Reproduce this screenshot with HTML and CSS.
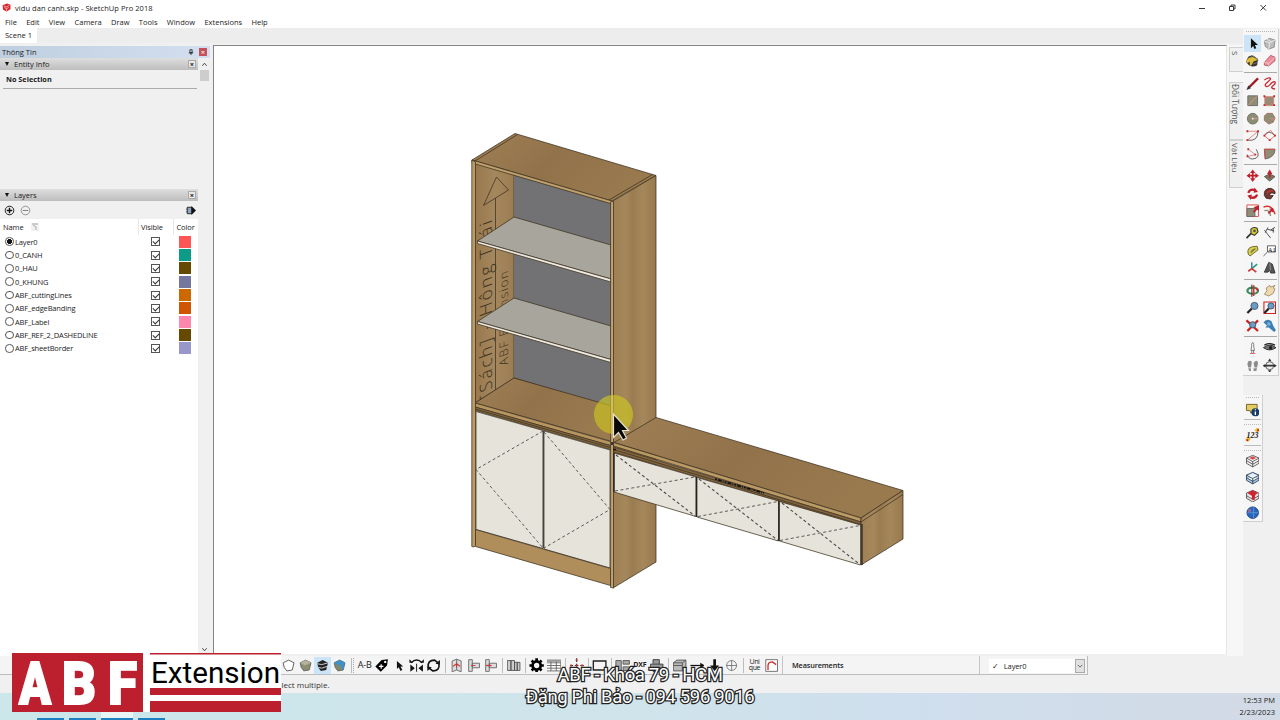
FILE: index.html
```html
<!DOCTYPE html>
<html lang="vi">
    <head>
        <meta charset="utf-8">
        <title>vidu dan canh.skp - SketchUp Pro 2018</title>
        <link rel="stylesheet" href="styles.css">
    </head>
    <body>
        <header class="titlebar">
            <svg class="app-icon" viewBox="0 0 16 16"><path fill="#d8232a" d="M1 4 9 1l6 2v8l-7 4-6-3z"/><path fill="none" stroke="#fff" d="m3 5 5 2 5-3M4 8l4 2 4-2M8 10v4"/></svg>
            <span class="title">vidu dan canh.skp - SketchUp Pro 2018</span>
            <svg class="window-buttons" viewBox="0 0 80 14"><path fill="none" stroke="#222" stroke-width=".9" d="M9 7.500h6M39.500 5.500h4v4h-4zM41 5V4h4v4h-1M70.500 4l5.500 5.500M76 4l-5.500 5.500"/></svg>
        </header>
        <nav class="menu">
            <span>File</span><span>Edit</span><span>View</span><span>Camera</span><span>Draw</span><span>Tools</span><span>Window</span><span>Extensions</span><span>Help</span>
        </nav>

        <div class="workspace">
            <div class="left">
                <div class="scenes"><span class="scene">Scene 1</span></div>
                <div class="content">
                    <aside class="tray">
                        <div class="tray-title"><span>Thông Tin</span>
                            <svg class="pin" viewBox="0 0 8 8"><path fill="none" stroke="#111" d="M2.500 1h3v4h-3zM1 5.200h6M4 5v3"/></svg>
                            <span class="tray-close">×</span>
                        </div>
                        <div class="tray-body">
                            <div class="panels">
                                <div class="panel-head"><i></i><span>Entity Info</span><b>×</b></div>
                                <div class="entity"><p>No Selection</p></div>
                                <div class="panel-head"><i></i><span>Layers</span><b>×</b></div>
                                <div class="layer-tools">
                                    <svg viewBox="0 0 12 12"><circle cx="6" cy="6" r="4.700" fill="none" stroke="#111"/><path stroke="#111" stroke-width="1.500" d="M3 6h6M6 3v6"/></svg>
                                    <svg viewBox="0 0 12 12"><circle cx="6" cy="6" r="4.700" fill="none" stroke="#777" stroke-width=".8"/><path stroke="#777" d="M3 6h6"/></svg>
                                    <svg class="details" viewBox="0 0 12 12"><path fill="#8aa5bc" stroke="#222" d="M2.500 2.500h5v7h-5z"/><path fill="#111" d="M1 4h1v1H1zM1 7h1v1H1zM7 1l5 5-5 5z"/></svg>
                                </div>
                                <div class="layers">
                                    <div class="layer head"><span class="name">Name <svg viewBox="0 0 8 8"><path fill="none" stroke="#aaa" d="M1 1h6M2 2l3 2v3"/></svg></span><span class="vis">Visible</span><span class="col">Color</span></div>
                                    <div class="layer"><span class="name"><i class="radio on"></i>Layer0</span><span class="vis"><i class="check"></i></span><span class="col"><i class="c-red"></i></span></div>
                                    <div class="layer"><span class="name"><i class="radio"></i>0_CANH</span><span class="vis"><i class="check"></i></span><span class="col"><i class="c-teal"></i></span></div>
                                    <div class="layer"><span class="name"><i class="radio"></i>0_HAU</span><span class="vis"><i class="check"></i></span><span class="col"><i class="c-brown"></i></span></div>
                                    <div class="layer"><span class="name"><i class="radio"></i>0_KHUNG</span><span class="vis"><i class="check"></i></span><span class="col"><i class="c-slate"></i></span></div>
                                    <div class="layer"><span class="name"><i class="radio"></i>ABF_cuttingLines</span><span class="vis"><i class="check"></i></span><span class="col"><i class="c-orange"></i></span></div>
                                    <div class="layer"><span class="name"><i class="radio"></i>ABF_edgeBanding</span><span class="vis"><i class="check"></i></span><span class="col"><i class="c-rust"></i></span></div>
                                    <div class="layer"><span class="name"><i class="radio"></i>ABF_Label</span><span class="vis"><i class="check"></i></span><span class="col"><i class="c-pink"></i></span></div>
                                    <div class="layer"><span class="name"><i class="radio"></i>ABF_REF_2_DASHEDLINE</span><span class="vis"><i class="check"></i></span><span class="col"><i class="c-brown"></i></span></div>
                                    <div class="layer"><span class="name"><i class="radio"></i>ABF_sheetBorder</span><span class="vis"><i class="check"></i></span><span class="col"><i class="c-lilac"></i></span></div>
                                </div>
                            </div>
                            <div class="scroll">
                                <svg viewBox="0 0 8 8"><path fill="none" stroke="#333" d="m1.500 5.500 2.500-3 2.500 3"/></svg>
                                <i></i>
                                <svg viewBox="0 0 8 8"><path fill="none" stroke="#333" d="m1.500 2.500 2.500 3 2.500-3"/></svg>
                            </div>
                        </div>
                    </aside>

                    <main class="viewport">
                        <svg class="model" viewBox="214 46 1012 607">
                            <defs>
                                <linearGradient id="side" x1="0" x2="1"><stop offset="0" stop-color="#9f8053"/><stop offset=".3" stop-color="#a4875c"/><stop offset=".45" stop-color="#9b7c51"/><stop offset=".7" stop-color="#a5875c"/><stop offset="1" stop-color="#99794e"/></linearGradient>
                                <linearGradient id="top" x1="0" x2="1" y2=".4"><stop offset="0" stop-color="#9f8055"/><stop offset=".5" stop-color="#92724a"/><stop offset="1" stop-color="#99794e"/></linearGradient>
                                <linearGradient id="inner" x1="0" x2="1"><stop offset="0" stop-color="#98784d"/><stop offset=".5" stop-color="#a5875e"/><stop offset="1" stop-color="#9c7d53"/></linearGradient>
                            </defs>
                            <g stroke="#3c3120" stroke-width=".75" stroke-linejoin="round">
                                <!-- tall cabinet -->
                                <path fill="url(#inner)" d="M475 163 514 172V378L475 403z"/>
                                <path fill="#727274" stroke="none" d="M514 172 611 202V408L514 379z"/>
                                <path fill="none" d="M514 378 611 407"/>
                                <g class="label">
                                    <path d="M496.500 177 508.500 190 483.500 205.500zM495.500 198V390"/>
                                    <text transform="matrix(0 -1 .95 -.35 492 397)" font-size="18" textLength="178">[Sách] - Hông Trái</text>
                                    <text transform="matrix(0 -1 .95 -.35 508 364)" font-size="12.500" textLength="94">ABF Extension</text>
                                </g>
                                <path fill="#a8a59d" d="M514 217 611 245V279L477.500 241z"/>
                                <path fill="#efebe2" d="M477.500 241 611 279V282L477.500 243.500z"/>
                                <path fill="#a8a59d" d="M514 298 611 326V359.500L477.500 321.500z"/>
                                <path fill="#efebe2" d="M477.500 321.500 611 359.500V362.500L477.500 324z"/>
                                <path fill="url(#top)" d="M514 378 612 406V441.500L475 403z"/>
                                <path fill="url(#top)" d="M472 160 515 133.500 656 175.500 612 201z"/>
                                <path fill="none" d="M475 161 517.500 134.500M609 200 652.500 174.500"/>
                                <path fill="#c0a06c" d="M472 160 612 201V204L472 163z"/>
                                <path fill="#b8955f" d="M475 403 612 442V446L475 407z"/>
                                <path fill="#84683f" d="M475 407 612 446V450L475 410.500z"/>
                                <path fill="none" d="M475 409 612 448"/>
                                <path fill="#e6e3da" d="M476 411.500 543 430.500V548.500L476 529.500zM544 431 610 450V568L544 549z"/>
                                <path fill="#b08e5c" d="M475.500 529.500 610.500 568.500V585.500L475.500 546.500z"/>
                                <path fill="#bc9a66" d="M471.800 160 475.500 162V545.500L474 547 471.800 546.500z"/>
                                <path fill="url(#side)" d="M613 201 656 175.500V562L613 588z"/>
                                <path fill="#c3a470" d="M610.600 202 613.500 201V588L610.600 587.500z"/>
                                <path fill="none" stroke="#222" d="M543.400 431V548"/>
                                <path class="dash" d="M543 431 476 469.500 543 548M544 432 610 509.500 544 548"/>
                                <!-- desk with three drawers -->
                                <path fill="url(#top)" d="M614 442.500 656 417.500 903 490.500 861 518z"/>
                                <path fill="#bc9a64" d="M613.500 442.500 861 518V522L613.500 446z"/>
                                <path fill="#83663e" d="M613.500 447 861 522V526L613.500 452z"/>
                                <path fill="none" d="M613.500 449.500 861 524.500"/>
                                <path fill="url(#side)" d="M861 518 903 490.500V539L861 565z"/>
                                <path fill="none" d="M861 522 903 494.500"/>
                                <path fill="#e6e3da" d="M614 453 696 477V516.500L614 492zM697 477.500 778.500 501V541L697 517zM779.500 501.500 860.500 525V565L779.500 541z"/>
                                <path fill="none" stroke="#222" stroke-width="1.200" d="M614 453V492M696.400 477V517M778.800 500.500V541M862 524V565"/>
                                <path class="dash heavy" d="M616 455 695 516M699 479 778 540.500M782 503 858 563"/>
                                <path class="dash" d="M615 491 695 477M698 516.500 778 501.500M780 540.500 860 525.500"/>
                                <path fill="none" stroke="#111" stroke-width="1.700" stroke-dasharray="2 1 4 1 1 1" d="M715 479 764 493"/>
                                <path stroke="#111" stroke-width="1.500" d="M613 449.500h3M612 442v3"/>
                            </g>
                            <circle cx="613.500" cy="414.500" r="19.500" fill="#cdc81f" opacity=".64"/>
                            <path stroke="#dcb873" stroke-width="1.500" d="M612 396V434"/>
                            <path fill="#080808" stroke="#e8e0d0" stroke-width="1.200" d="M613.500 414V437.500L618.500 432.500 623 440 626.500 438 622.500 430.500H628.500z"/>
                        </svg>
                    </main>

                    <div class="side-tabs"><span>S</span><span>Đối Tượng</span><span>Vật Liệu</span></div>
                </div>
            </div>

            <div class="docks">
                <div class="dock large">
                    <svg class="active" viewBox="0 0 16 16"><path fill="#111" d="M6 2v11l2.500-2.500L10 14l2-1-1.500-3.500H14z"/></svg>
                    <svg viewBox="0 0 16 16"><path fill="#bbb" stroke="#888" d="m2 5 6-3 6 2-1 8-6 2-4-3z"/><path fill="none" stroke="#eee" d="m2 5 6 2 6-3M8 7l-1 7M5 3l5 3"/></svg>
                    <svg viewBox="0 0 16 16"><path fill="#333" d="M1 9q0-5 6-7l7 4-1 7q-7 4-12-3z"/><path fill="#e0bd36" d="M1 8q3-5 8-4l5 3-5 2-3 5q-2-1-1-5l-3 2z"/><path fill="none" stroke="#777" d="M6 4q3-4 8 4M8 12l5-2"/></svg>
                    <svg viewBox="0 0 16 16"><path fill="#ee8c9b" stroke="#9b4b59" stroke-width=".8" d="M2 10 9 2l5 2v4l-7 6-5-1z"/><path fill="none" stroke="#f8c5cb" d="m2 10 5 1 7-7M7 11v3"/></svg>
                    <hr>
                    <svg viewBox="0 0 16 16"><path stroke="#a01420" stroke-width="2.500" d="M4 12 14 2"/><path fill="#333" d="m1 15 2-5 3 3z"/></svg>
                    <svg viewBox="0 0 16 16"><path fill="none" stroke="#c72731" stroke-width="1.500" d="M2 4c4-4 9-3 6 0S1 9 4 11s5-4 8-5 3 2 0 4-2 4 2 4"/></svg>
                    <svg viewBox="0 0 16 16"><path fill="#8f8e75" stroke="#666" d="M2.500 2.500h11v11h-11z"/><path stroke="#e09a8a" d="M3 13 13 3"/></svg>
                    <svg viewBox="0 0 16 16"><path fill="#8f8e75" stroke="#d9817b" d="M2.500 3.500h10v10h-10z"/><path stroke="#d77" d="m3 4 9 9"/><path fill="#c22" d="M1 2h2v2H1zM12 2h2v2h-2zM12 12h2v2h-2zM1 12h2v2H1z"/></svg>
                    <svg viewBox="0 0 16 16"><circle cx="8" cy="8" r="6" fill="#8f8e75" stroke="#65705a"/><path stroke="#d99" d="M8 8h6"/><circle cx="8" cy="8" r="1" fill="#eee"/></svg>
                    <svg viewBox="0 0 16 16"><path fill="#8f8e75" stroke="#a76b60" d="m5 2 6 0 3 5-2 5-5 2-5-4V5z"/><path stroke="#d88" d="M8 8h6"/></svg>
                    <svg viewBox="0 0 16 16"><path fill="none" stroke="#555" d="M2 13Q14 15 14 3"/><path stroke="#e07f7f" d="M2 13 14 3M2 3h12"/><path fill="#c22" d="M1 2h2v2H1zM13 2h2v2h-2zM1 12h2v2H1z"/></svg>
                    <svg viewBox="0 0 16 16"><path fill="none" stroke="#555" d="M2 8q4-8 12 0"/><path fill="none" stroke="#d44" stroke-width=".8" d="m2 8 6 5 6-5-5-6z"/><path fill="#c22" d="M1 7h2v2H1zM7 12h2v2H7zM13 7h2v2h-2z"/></svg>
                    <svg viewBox="0 0 16 16"><path fill="none" stroke="#555" d="M12 3q6 10-4 11-5 0-6-5"/><path fill="none" stroke="#d66" stroke-width=".8" d="m3 3 8 6-8 2"/><path fill="#c22" d="M2 2h2v2H2zM10 8h2v2h-2zM1 10h2v2H1z"/></svg>
                    <svg viewBox="0 0 16 16"><path fill="#8f8e75" stroke="#666" d="M2 3h12q0 9-11 11z"/><path fill="none" stroke="#d44" d="M14 3H2l1 11"/></svg>
                    <hr>
                    <svg viewBox="0 0 16 16"><path fill="#c3202c" d="m8 1 3 4H9v2h2V5l4 3-4 3V9H9v2h2l-3 4-3-4h2V9H5v2L1 8l4-3v2h2V5H5z"/></svg>
                    <svg viewBox="0 0 16 16"><path fill="#77775e" stroke="#555" d="m2 9 6-3 6 3-6 5z"/><path fill="#c3202c" d="m8 1 3 5H9v4H7V6H5z"/></svg>
                    <svg viewBox="0 0 16 16"><path fill="none" stroke="#c3202c" stroke-width="2.500" d="M3 7q2-5 8-3M13 9q-2 5-8 3"/><path fill="#c3202c" d="m10 1 4 5-5 1zM6 15l-4-5 5-1z"/></svg>
                    <svg viewBox="0 0 16 16"><path fill="#713a32" stroke="#3e2927" d="M2 10Q1 2 9 2q6 2 5 6-5-2-6 1 1 2 4 1l-3 4-5-1z"/><path fill="none" stroke="#b33" stroke-width="2" d="M5 8q2-4 7-3"/></svg>
                    <svg viewBox="0 0 16 16"><path fill="none" stroke="#d44" d="M1.500 1.500h13v13h-13z"/><path fill="#8f8e75" stroke="#666" d="M1.500 5.500h9v9h-9z"/><path fill="#c3202c" d="M8 9 11 6 9 4l6-2v6l-2-1-3 3z"/></svg>
                    <svg viewBox="0 0 16 16"><path fill="none" stroke="#d33" stroke-width="1.600" d="M1 4Q10 0 14 12"/><path fill="none" stroke="#8f8e75" stroke-width="1.500" d="M2 8q6-2 7 6"/><path fill="#c3202c" d="m6 10 3-3-2-1 5-1v5l-2-1-3 3z"/></svg>
                    <hr>
                    <svg viewBox="0 0 16 16"><path fill="#d6cb2e" stroke="#333" stroke-width="1.200" d="M6 4q3-3 7-1l1 4-4 4-4-2z"/><path stroke="#333" stroke-width="2" d="m6 9-5 5"/><circle cx="10" cy="6" r="1.500" fill="#555"/></svg>
                    <svg viewBox="0 0 16 16"><path fill="none" stroke="#444" d="m2 5 7 9M5 4l8 2M3 8l3-6M9 5l5-3M12 3v5"/></svg>
                    <svg viewBox="0 0 16 16"><path fill="#d6cf53" stroke="#655f21" d="M3 12Q0 3 13 3l1 4-9 7z"/><path fill="#eee" stroke="#655f21" d="M6 10q0-3 5-4z"/></svg>
                    <svg viewBox="0 0 16 16"><path fill="#fff" stroke="#555" d="M5.500 2.500h9v7h-9zM5 10l-4 4"/><text x="6" y="9" font-size="7">A1</text></svg>
                    <svg viewBox="0 0 16 16"><path stroke="#2a9a70" stroke-width="1.800" d="M7 9 13 4"/><path stroke="#27b" stroke-width="1.500" d="M7 9V2"/><path stroke="#c33" stroke-width="1.800" d="m7 9 5 4M7 9l-4 3"/></svg>
                    <svg viewBox="0 0 16 16"><path fill="#555" stroke="#333" d="m7 2 4 2 3 10H9l-1-3-2 2H2z"/><path fill="none" stroke="#999" d="m8 3 1 8"/></svg>
                    <hr>
                    <svg viewBox="0 0 16 16"><ellipse cx="8" cy="8" rx="6" ry="3.500" fill="none" stroke="#3c8c5b" stroke-width="2.500"/><path fill="none" stroke="#c33" stroke-width="2" d="M9 2v12M12 5l2 3"/><path stroke="#333" d="M7 1v14"/></svg>
                    <svg viewBox="0 0 16 16"><path fill="#eed9ac" stroke="#8c7550" stroke-width=".8" d="m2 12 3-4-1-3 4-3 1 2 5-2-2 3 2 1-2 5-5 3z"/></svg>
                    <svg viewBox="0 0 16 16"><path stroke="#222" stroke-width="2.500" d="m2 14 5-5"/><circle cx="10" cy="6" r="4" fill="#6a9cc5" stroke="#43556a"/></svg>
                    <svg viewBox="0 0 16 16"><path fill="none" stroke="#c22" stroke-width="1.200" d="M1.500 1.500h13v13h-13z"/><path stroke="#222" stroke-width="2.500" d="m2 14 5-5"/><circle cx="9.500" cy="6" r="3.500" fill="#6a9cc5" stroke="#43556a"/></svg>
                    <svg viewBox="0 0 16 16"><path stroke="#c22" stroke-width="2.500" d="m1 2 13 12M14 2 2 14"/><circle cx="8" cy="7" r="3.500" fill="#6a9cc5" stroke="#43556a"/></svg>
                    <svg viewBox="0 0 16 16"><path fill="#3d7eb3" d="M1 4q5-5 9-1l2 5 3 5-2 2-6-5H3l2-2z"/><circle cx="7" cy="6" r="2" fill="#77b0db"/></svg>
                    <hr>
                    <svg viewBox="0 0 16 16"><path fill="#fff" stroke="#555" stroke-width=".8" d="M8 2q2 2 1 4l1 5H6l1-5Q6 4 8 2zM7 11v3M9 11v3"/><path stroke="#d55" d="M5 14.500h6"/></svg>
                    <svg viewBox="0 0 16 16"><path fill="#777" stroke="#222" d="M1 8q7-6 14 0-7 5-14 0z"/><circle cx="9" cy="8" r="2" fill="#222"/><path fill="none" stroke="#222" stroke-width="1.500" d="M2 5q6-3 12 0"/></svg>
                    <svg viewBox="0 0 16 16"><path fill="#8c8c8c" d="M3 3q4-2 4 2l-1 5H3L2 6zM3 11h3v3H4zM9 5q4-5 5 0l-1 5h-3zM9 11h4l-1 3H9z"/></svg>
                    <svg viewBox="0 0 16 16"><circle cx="8" cy="8" r="4.500" fill="#eee" stroke="#555" stroke-width="1"/><path fill="#333" d="m8 0 2 3H6zM8 16l2-3H6zM0 8l3-2v4zM16 8l-3-2v4zM3 7h10v2H3z"/></svg>
                </div>

                <div class="dock small">
                    <svg viewBox="0 0 16 16"><path fill="#e5cb63" stroke="#6b5b20" d="M1 2h12v7H8l-2 3-1-3H1z"/><circle cx="11" cy="11" r="4.500" fill="#173c69"/><path stroke="#fff" stroke-width="1.500" d="M11 10v4M11 7.500v1.200"/></svg>
                    <hr class="grip">
                    <svg viewBox="0 0 16 16"><path stroke="#efb936" stroke-width="4" stroke-dasharray="5 9.800" d="M1 15 15 1"/><text x="1" y="12" font-size="9" font-weight="bold" fill="#222" font-style="italic">123</text><path fill="#c22" d="M1 13h2v2H1zM13 2h2v2h-2z"/></svg>
                    <hr class="grip">
                    <svg viewBox="0 0 16 16"><path fill="#f5eeee" stroke="#444" stroke-width=".9" d="m1 5 7-3 7 3v6l-7 4-7-4zM1 5l7 4 7-4M1 8l7 4 7-4M8 9v6"/><path fill="#d64b52" d="m4 5 4-2 4 2-4 2z"/></svg>
                    <svg viewBox="0 0 16 16"><path fill="#a8c5e4" stroke="#24384e" stroke-width=".9" d="m1 5 7-3 7 3v6l-7 4-7-4zM1 5l7 4 7-4M1 8l7 4 7-4M8 9v6"/><path fill="#e8f1fa" d="m4 5 4-2 4 2-4 2z"/></svg>
                    <svg viewBox="0 0 16 16"><path fill="#e8dddd" stroke="#444" stroke-width=".9" d="m1 5 7-3 7 3v6l-7 4-7-4zM1 8l7 4 7-4"/><path fill="#cc2430" d="m2 5 6-3 6 3-3 2-1 6-3-1V8z"/></svg>
                    <svg viewBox="0 0 16 16"><circle cx="8" cy="8" r="6.500" fill="#2867bd" stroke="#20457d"/><path stroke="#5f95d4" d="M2 8h12M9 2v12"/><path fill="#a36c9c" d="M3 4h3v3H3z"/></svg>
                </div>
            </div>
        </div>

        <div class="bottom-tools">
            <div class="icons">
                <svg viewBox="0 0 16 16"><path fill="#fff" stroke="#555" d="m2 5 6-3 6 3-2 8-6 1-3-4z"/></svg>
                <svg viewBox="0 0 16 16"><path fill="#8d8d72" stroke="#666" d="m2 5 6-3 6 3-2 8-6 1-3-4z"/><path fill="#b4b29a" d="m2 5 6-3 6 3-7 3z"/></svg>
                <svg class="active" viewBox="0 0 16 16"><path fill="#222" d="m2 5 6-3 6 3-2 8-6 1-3-4z"/><path fill="none" stroke="#ddd" d="m2 6 5 1 7-2M3 10l4 1 6-2"/></svg>
                <svg viewBox="0 0 16 16"><path fill="#7f8872" stroke="#666" d="m2 5 6-3 6 3-2 8-6 1-3-4z"/><path fill="#3a93cf" d="m2 5 6-3 6 3-7 3zM9 8l5-3-2 8z"/></svg>
                <i class="sep grip"></i>
                <span class="ab">A-B</span>
                <svg viewBox="0 0 16 16"><path fill="#000" d="m1 9 7-7 7-1-1 7-7 7z"/><circle cx="12" cy="4" r="1.300" fill="#fff"/><path stroke="#fff" stroke-width="1.300" d="M5 9h5M7.500 6.500v5"/></svg>
                <svg viewBox="0 0 16 16"><path fill="#111" d="M5 3v9l2-2 2 4 2-1-2-4h3z"/></svg>
                <svg viewBox="0 0 16 16"><path fill="none" stroke="#111" stroke-width="1.600" d="M2 5q6-6 12 0"/><path fill="#111" d="m1 7 5 4-5 4zM15 7l-5 4 5 4zM12 5l4 0V1zM4 5 0 5V1zM7.500 6h1v9h-1z"/></svg>
                <svg viewBox="0 0 16 16"><path fill="none" stroke="#111" stroke-width="1.800" d="M2 10Q1 2 9 2l4 3M14 6q1 8-7 8l-4-3"/><path fill="#111" d="M15 2v5l-5-1zM1 14V9l5 1z"/></svg>
                <i class="sep"></i>
                <svg viewBox="0 0 16 16"><path fill="#ddd" stroke="#666" d="M3 3l5-2 5 2v12l-5-2-5 2zM8 1v12"/><path fill="none" stroke="#c33" stroke-width="1.300" d="m4 9 4-3 4 3M8 5v5"/></svg>
                <svg viewBox="0 0 16 16"><path fill="#ddd" stroke="#666" d="M2.500 1.500h4v13h-4zM6.500 5.500h8v5h-8z"/><path stroke="#c33" d="M5 8h5"/></svg>
                <svg viewBox="0 0 16 16"><path fill="#ddd" stroke="#666" d="M2.500 1.500h4v13h-4zM6.500 5.500h8v5h-8z"/><path stroke="#c33" stroke-width="1.500" d="M3 8h6"/></svg>
                <i class="sep"></i>
                <svg viewBox="0 0 16 16"><path fill="#ccc" stroke="#555" d="M1 2.500h4v11H1zM5 2.500h4v11H5zM9 4.500h3v9H9zM12 4.500h3v9h-3z"/></svg>
                <i class="sep"></i>
                <svg viewBox="0 0 16 16"><circle cx="8" cy="8" r="4.500" fill="none" stroke="#000" stroke-width="3"/><path stroke="#000" stroke-width="3" d="M8 0v3M8 13v3M0 8h3M13 8h3M2.500 2.500l2 2M11.500 11.500l2 2M13.500 2.500l-2 2M4.500 11.500l-2 2"/></svg>
                <svg viewBox="0 0 16 16"><path fill="#fff" stroke="#555" stroke-width=".9" d="M0 2h16v12H0zM0 5h16M0 8h16M0 11h16M5 2v12M11 2v12"/><path fill="#999" d="M0 2h16v2H0z"/></svg>
                <i class="sep"></i>
                <svg viewBox="0 0 16 16"><path stroke="#333" stroke-width="1.300" stroke-dasharray="4 2" d="M0 8h16M8 0v16"/><path fill="#c33" d="M7 7h2v2H7zM7 1h2v2H7zM13 7h2v2h-2zM1 7h2v2H1z"/></svg>
                <i class="sep"></i>
                <svg viewBox="0 0 16 16"><path fill="none" stroke="#222" stroke-width="1.500" d="M1 3h14v10H1z"/></svg>
                <i class="sep"></i>
                <svg viewBox="0 0 16 16"><path fill="#aaa" stroke="#555" d="M.5 2.500h6v11h-6zM8.500 2.500h7v4h-7zM8.500 9.500h7v4h-7z"/></svg>
                <span class="dxf">DXF</span>
                <svg viewBox="0 0 16 16"><path fill="#999" stroke="#333" d="M1 6.500h14v7H1zM4 6V1.500h7v5M4 10.500h8v4H4z"/></svg>
                <i class="sep"></i>
                <svg viewBox="0 0 16 16"><path fill="#bbb" stroke="#555" d="m1 5 4-3h10v9l-4 3H1zM1 5h10v9M11 5l4-3M1 8h10"/></svg>
                <svg viewBox="0 0 16 16"><path stroke="#111" stroke-width="1.400" d="M0 8h12"/><path fill="#111" d="m11 5 5 3-5 3z"/></svg>
                <svg viewBox="0 0 16 16"><path fill="#111" d="M6.500 1h3v7H13l-5 6-5-6h3.500z"/></svg>
                <svg viewBox="0 0 16 16"><circle cx="8" cy="8" r="5.500" fill="none" stroke="#777"/><path stroke="#777" d="M2 8h12M8 2v12"/></svg>
                <i class="sep"></i>
                <span class="unique">Uni<br>que</span>
                <svg viewBox="0 0 16 16"><path fill="#fff" stroke="#666" d="M1.500 1.500h13v13h-13z"/><path fill="none" stroke="#c33" stroke-width="1.500" d="M4 13V8q0-4 5-4l4 3"/></svg>
            </div>
            <div class="measure">Measurements</div>
            <div class="layer-select"><div><span>✓</span><span>Layer0</span><b><svg viewBox="0 0 8 8"><path fill="none" stroke="#444" d="m1 2.500 3 3 3-3"/></svg></b></div></div>
        </div>
        <div class="status"><span>lect multiple.</span></div>
        <footer class="taskbar">
            <div class="apps"><i></i><i></i><i></i><i></i></div>
            <div class="clock">12:53 PM<br>2/23/2023</div>
        </footer>

        <!-- logo and trainer caption laid over the app -->
        <svg class="logo" viewBox="0 0 269 59">
            <path fill="#fff" d="M0 0h269v59H0z"/>
            <path fill="#bc1f2d" d="M0 0h131v59H0zM138 0h131v1.500H138zM138 35h131v7H138zM138 48h131v11H138z"/>
            <g class="abf">
                <text transform="translate(7 51)" textLength="32" lengthAdjust="spacingAndGlyphs">A</text>
                <text transform="translate(50 51)" textLength="34" lengthAdjust="spacingAndGlyphs">B</text>
                <text transform="translate(96 51)" textLength="29" lengthAdjust="spacingAndGlyphs">F</text>
            </g>
            <text class="ext" x="139" y="29.500" textLength="129" lengthAdjust="spacingAndGlyphs">Extension</text>
        </svg>
        <div class="caption">ABF - Khóa 79 - HCM<br>Đặng Phi Bảo - 094 596 9016</div>
    </body>
</html>
```
FILE: styles.css
```css
* { box-sizing: border-box; }

body
{
    margin: 0;
    width: 1280px;
    height: 720px;
    overflow: hidden;
    display: flex;
    flex-direction: column;
    position: relative;
    background: #f0f0f0;
    color: #1b1b1b;
    font: 7.5px/10px "Open Sans", "Noto Sans", sans-serif;
}

svg { display: block; flex: none; }

i { font-style: normal; }

.titlebar
{
    display: flex;
    align-items: center;
    height: 15px;
    padding-left: 2px;
    background: #fff;
}

.app-icon
{
    width: 9px;
    height: 9px;
    margin-right: 4px;
}

.title { letter-spacing: 0.05px; }

.window-buttons
{
    width: 80px;
    height: 14px;
    margin-left: auto;
    margin-right: 10px;
}

.menu
{
    display: flex;
    gap: 9.3px;
    height: 13px;
    padding: 1.5px 5px 0;
    background: #fff;
    letter-spacing: 0;
}

.workspace
{
    display: flex;
    height: 628px;
}

.left { width: 1243px; }

.scenes
{
    height: 15px;
    background: #ededed;
}

.scene
{
    display: block;
    width: 37px;
    height: 15px;
    padding: 2px 0 0 5px;
    background: #fff;
}

.content
{
    display: flex;
    height: 613px;
    padding-top: 2px;
}

.tray
{
    width: 213px;
    padding-right: 3px;
}

.tray-title
{
    display: flex;
    align-items: center;
    height: 12px;
    margin-top: 1px;
    padding-left: 2px;
    background: linear-gradient(90deg, #bfcfdf, #d3dff0);
}

.pin
{
    width: 6px;
    height: 6px;
    margin-left: auto;
    margin-right: 5px;
}

.tray-close
{
    width: 8px;
    height: 8px;
    margin-right: 3px;
    background: #c4515b;
    color: #fff;
    line-height: 8px;
    text-align: center;
}

.tray-body
{
    display: flex;
    height: 598px;
}

.panels
{
    display: flex;
    flex-direction: column;
    width: 198px;
}

.panel-head
{
    display: flex;
    align-items: center;
    height: 12px;
    flex: none;
    padding: 0 2px 0 5px;
    background: linear-gradient(#dedede, #bdbdbd);
}

.panel-head i
{
    margin-right: 4px;
    border: 2.5px solid transparent;
    border-top: 4px solid #111;
    border-bottom: 0;
}

.panel-head span { padding-left: 1px; }

.panel-head b
{
    width: 8px;
    height: 8px;
    margin-left: auto;
    border: 1px solid #aaa;
    background: #e8e8e8;
    line-height: 6px;
    text-align: center;
}

.entity
{
    height: 119px;
    padding: 4px 1px 0 3px;
    font-weight: bold;
    font-size: 7.3px;
}

.entity p
{
    margin: 0;
    height: 15px;
    padding-left: 3px;
    border-bottom: 1px solid #aaa;
}

.layer-tools
{
    display: flex;
    align-items: center;
    gap: 5px;
    height: 18px;
    padding: 0 2px 0 4px;
}

.layer-tools svg
{
    width: 11px;
    height: 11px;
}

.layer-tools .details { margin-left: auto; }

.layers
{
    flex: 1;
    background: #fff;
    letter-spacing: -0.15px;
}

.layer
{
    display: flex;
    align-items: center;
    height: 13.35px;
}

.layer.head { height: 16px; letter-spacing: -.1px; }

.name
{
    display: flex;
    align-items: center;
    width: 138px;
    padding-left: 5px;
}

.head .name { padding-left: 3px; gap: 7px; }

.head svg
{
    width: 8px;
    height: 8px;
    background: #f1f1f1;
}

.vis, .col
{
    display: flex;
    align-items: center;
    justify-content: center;
    width: 35px;
}

.col { width: 24px; }

.head .vis, .head .col
{
    height: 16px;
    border-left: 1px solid #e7e7e7;
}

.head .vis { padding-right: 8px; }

.radio
{
    width: 8.5px;
    height: 8.5px;
    margin-right: 1.5px;
    border: 1px solid #555;
    border-radius: 50%;
}

.radio.on { background: radial-gradient(#111 0 45%, #fff 55%); }

.check
{
    width: 9px;
    height: 9px;
    border: 1px solid #555;
}

.check::after
{
    content: "";
    display: block;
    width: 5px;
    height: 3px;
    margin: 1px;
    border: solid #333;
    border-width: 0 0 1px 1px;
    transform: rotate(-45deg);
}

.col i
{
    width: 12px;
    height: 12px;
}

.c-red { background: #ff5555; }
.c-teal { background: #0b9b87; }
.c-brown { background: #654900; }
.c-slate { background: #75789e; }
.c-orange { background: #cb6800; }
.c-rust { background: #cf5500; }
.c-pink { background: #ff86ac; }
.c-lilac { background: #9896ca; }

.scroll
{
    display: flex;
    flex-direction: column;
    align-items: center;
    width: 12px;
    padding: 3px 0;
}

.scroll svg
{
    width: 7px;
    height: 7px;
}

.scroll i
{
    width: 9px;
    height: 11px;
    margin: 2px 0 auto;
    background: #cdcdcd;
}

.viewport
{
    width: 1014px;
    height: 609px;
    overflow: hidden;
    border: solid #858585;
    border-width: 1px 0 0 1px;
    border-right: 1px solid #e5e5e5;
    background: #fff;
}

.model
{
    width: 1012px;
    height: 607px;
}

.label path, .dash { fill: none; }

.label text
{
    fill: #3c3120;
    stroke: none;
    font-family: "Open Sans", sans-serif;
    font-weight: 300;
}

.dash
{
    stroke: #4b4b48;
    stroke-width: .9;
    stroke-dasharray: 3 2.5;
}

.heavy { stroke-width: 1.1; }

.side-tabs
{
    display: flex;
    flex-direction: column;
    width: 16px;
    padding-left: 2px;
    background: #f7f7f7;
}

.side-tabs span
{
    height: 48px;
    padding-top: 2px;
    padding-right: 2px;
    border: 1px solid #d0d0d0;
    border-right: 0;
    background: #f0f0f0;
    writing-mode: vertical-rl;
    line-height: 11px;
    color: #555;
    font-size: 8px;
}

.side-tabs span:first-child
{
    height: 25px;
    margin: 2px 0 10px;
    padding-top: 3px;
}

.side-tabs span:nth-child(2) { height: 58px; padding-top: 1px; font-size: 8.3px; }

.docks { width: 37px; }

.dock
{
    display: grid;
    background: #f6f6f6;
    border: solid #cfcfcf;
    border-width: 0 1px 1px 0;
}

.dock::before
{
    content: "";
    grid-column: 1 / -1;
    height: 3px;
    margin: 2px 3px 0;
    border-top: 1px dotted #b5b5b5;
}

.large
{
    grid-template-columns: 17.5px 17.5px;
    grid-auto-rows: auto;
    width: 36px;
    margin-top: 1px;
    padding-bottom: 1px;
}

.dock svg
{
    width: 17.4px;
    height: 17.4px;
    padding: 1.6px;
    position: relative;
    left: .7px;
    font-family: "Liberation Serif", serif;
}

.dock svg.active, .icons svg.active
{
    background: #cce4f7;
}

.dock hr
{
    grid-column: 1 / -1;
    width: auto;
    height: 1px;
    margin: 2.1px 1px;
    border: 0;
    background: #a9a9a9;
}

.small
{
    width: 20px;
    margin-top: 19px;
}

.dock hr.grip
{
    height: 6px;
    margin: 1px 1px;
    border-top: 1px solid #bbb;
    border-bottom: 1px dotted #bbb;
    background: none;
}

.bottom-tools
{
    display: flex;
    height: 19px;
    flex: none;
    width: 1088px;
    border: solid #bdbdbd;
    border-width: 0 1px 1px 0;
    background: #f4f4f4;
}

.icons
{
    display: flex;
    align-items: center;
    width: 782px;
    padding-left: 279.5px;
}

.icons > svg
{
    width: 17.25px;
    height: 17px;
    padding: 1.3px;
}

.sep
{
    flex: none;
    width: 1px;
    height: 15px;
    margin: 0 2.3px;
    background: #bdbdbd;
}

.sep.grip
{
    width: 3px;
    background: none;
    border-left: 1px solid #bbb;
    border-right: 1px dotted #aaa;
}

.ab, .dxf, .unique
{
    flex: none;
    width: 17.25px;
    text-align: center;
    font-size: 9px;
    letter-spacing: -.2px;
    white-space: nowrap;
}

.dxf { font-size: 7px; font-weight: bold; }

.unique { font-size: 7px; line-height: 6.5px; letter-spacing: -.4px; }

.measure
{
    width: 198px;
    padding: 4px 0 0 9px;
    border: 1px solid #c5c5c5;
    border-width: 0 1px;
    font-size: 7.3px;
    font-weight: 600;
    letter-spacing: -.13px;
}

.layer-select
{
    flex: 1;
    padding: 3px 2px 2px 9px;
    letter-spacing: -.15px;
}

.layer-select div
{
    display: flex;
    align-items: center;
    gap: 5px;
    height: 14px;
    padding-left: 3px;
    background: #fff;
}

.layer-select b
{
    margin-left: auto;
    width: 10px;
    height: 14px;
    padding: 3px 1px;
    border: 1px solid #aaa;
    background: #e1e1e1;
}

.status
{
    height: 18px;
    flex: none;
    padding: 5px 0 0 281.5px;
    font-size: 8px;
    color: #333;
}

.taskbar
{
    display: flex;
    justify-content: space-between;
    height: 27px;
    flex: none;
    background: linear-gradient(90deg, #cbe7ea, #cfe4eb 50%, #cfdeed 72%, #d2dae5);
}

.apps
{
    display: flex;
    gap: 5px;
    padding: 25px 0 0 37px;
}

.apps i
{
    width: 27px;
    height: 2px;
    background: #1b7fc0;
}

.apps i:nth-child(3) { width: 32px; box-shadow: 0 -9px 0 7px #e9f4f7; clip-path: inset(-9px 0 0); }

.clock
{
    padding: 1px 5px 0 0;
    text-align: right;
    font-size: 7.5px;
    line-height: 12px;
}

.logo
{
    position: absolute;
    left: 12px;
    top: 653px;
    width: 269px;
    height: 59px;
    overflow: visible;
    font-family: Roboto, sans-serif;
}

.abf
{
    fill: #fff;
    stroke: #fff;
    stroke-width: 2px;
    font-size: 60px;
    font-weight: 900;
}

.ext { font-size: 30px; }

.caption
{
    position: absolute;
    left: 440px;
    top: 665px;
    width: 400px;
    text-align: center;
    color: #fff;
    font: 18.5px/21.5px Roboto, sans-serif;
    letter-spacing: -.35px;
    -webkit-text-stroke: 2.5px #222;
    paint-order: stroke fill;
}
```
